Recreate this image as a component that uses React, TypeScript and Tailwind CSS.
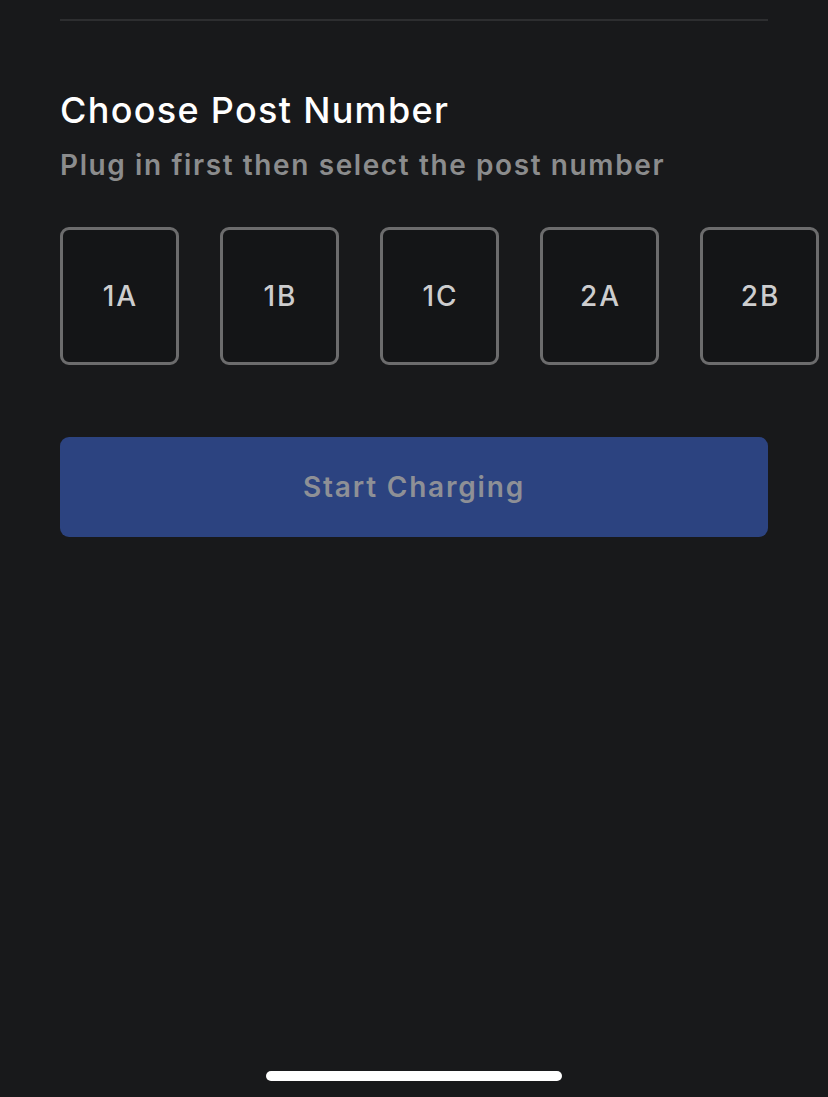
const posts = ["1A", "1B", "1C", "2A", "2B"];

export default function App() {
  return (
    <div
      className="relative flex h-[1097px] w-[828px] flex-col overflow-hidden bg-[#18191b] px-[60px]"
      style={{ fontFamily: "Inter, 'Noto Sans', sans-serif" }}
    >
      <div className="mt-[19px] h-[2px] w-full bg-[#2d2e30]" />

      <h1 className="mt-[67px] text-[36px] leading-[44px] font-medium tracking-[1.3px] text-white">
        Choose Post Number
      </h1>
      <p className="mt-[15px] text-[28px] leading-[36px] font-semibold tracking-[1.6px] text-[#8b8c8d]">
        Plug in first then select the post number
      </p>

      <div className="mt-[44px] flex gap-[41px]">
        {posts.map((p) => (
          <button
            key={p}
            className="flex h-[138px] w-[119px] shrink-0 items-center justify-center rounded-[9px] border-[3px] border-[#6c6c6d] bg-[#141517] pl-[2px] text-[28px] font-medium tracking-[2px] text-[#cdcdce]"
          >
            {p}
          </button>
        ))}
      </div>

      <button className="mt-[72px] flex h-[100px] w-full items-center justify-center rounded-[9px] bg-[#2c4380] text-[28px] font-semibold tracking-[1.8px] text-[#8e9096]">
        Start Charging
      </button>

      <div className="mt-auto mb-[16px] flex justify-center">
        <div className="h-[10px] w-[296px] rounded-full bg-white" />
      </div>
    </div>
  );
}
